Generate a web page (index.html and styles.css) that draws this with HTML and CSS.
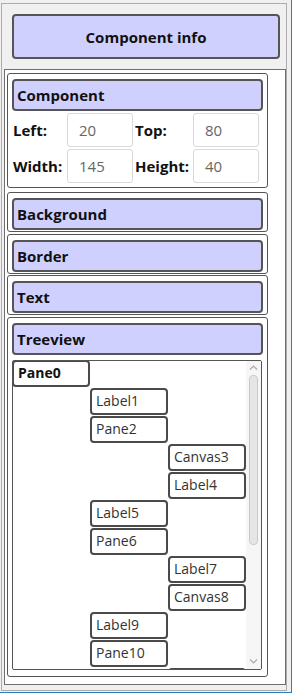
FILE: index.html
```html
<!DOCTYPE html>
<html>
<head>
<meta charset="utf-8">
<link rel="stylesheet" href="styles.css">
</head>
<body>
<div class="window">
  <div class="panel">
    <div class="title-btn">Component info</div>
    <div class="scroller">
      <section class="sec sec-comp">
        <div class="hdr">Component</div>
        <div class="props">
          <span class="lbl">Left:</span><span class="inp">20</span>
          <span class="lbl lbl2">Top:</span><span class="inp">80</span>
          <span class="lbl">Width:</span><span class="inp">145</span>
          <span class="lbl lbl2">Height:</span><span class="inp">40</span>
        </div>
      </section>
      <section class="sec"><div class="hdr">Background</div></section>
      <section class="sec"><div class="hdr">Border</div></section>
      <section class="sec"><div class="hdr">Text</div></section>
      <section class="sec sec-tree">
        <div class="hdr">Treeview</div>
        <div class="tree">
          <div class="tree-items">
            <div class="node root">Pane0</div>
            <div class="node l1">Label1</div>
            <div class="node l1">Pane2</div>
            <div class="node l2">Canvas3</div>
            <div class="node l2">Label4</div>
            <div class="node l1">Label5</div>
            <div class="node l1">Pane6</div>
            <div class="node l2">Label7</div>
            <div class="node l2">Canvas8</div>
            <div class="node l1">Label9</div>
            <div class="node l1">Pane10</div>
            <div class="node l2"></div>
          </div>
          <div class="vscroll">
            <svg class="arrow" width="15" height="14" viewBox="0 0 15 14"><polyline points="4,8.5 7.5,5 11,8.5" fill="none" stroke="#a8a8a8" stroke-width="1.2"/></svg>
            <div class="thumb"></div>
            <div class="spacer"></div>
            <svg class="arrow" width="15" height="14" viewBox="0 0 15 14"><polyline points="4,4.5 7.5,8 11,4.5" fill="none" stroke="#a8a8a8" stroke-width="1.2"/></svg>
          </div>
        </div>
      </section>
    </div>
  </div>
</div>
</body>
</html>
```
FILE: styles.css
```css
* { box-sizing: border-box; }
html, body { margin: 0; padding: 0; }
body {
  width: 293px;
  height: 695px;
  overflow: hidden;
  background: #ffffff;
  font-family: "Open Sans", "Noto Sans", sans-serif;
  color: #111;
}
.window {
  width: 292px;
  height: 693px;
  background: #f0f0f0;
  border-right: 1px solid #2f7bc4;
  border-bottom: 1px solid #2f7bc4;
  padding: 3px 0 0 1px;
}
.panel {
  width: 286px;
  height: 688px;
  border: 1px solid #adadad;
  background: #f0f0f0;
  padding: 10px 0 0 0;
}
.title-btn {
  margin-left: 10px;
  width: 268px;
  height: 45px;
  background: #d0d0ff;
  border: 2px solid #555;
  border-radius: 4px;
  display: flex;
  align-items: center;
  justify-content: center;
  font-weight: 700;
  font-size: 15px;
}
.scroller {
  margin: 10px 0 0 2px;
  width: 282px;
  height: 616px;
  background: #fff;
  border: 1px solid #6e6e6e;
  padding: 3px 0 0 2px;
  overflow: hidden;
}
.sec {
  width: 261px;
  border: 1px solid #555;
  border-radius: 3px;
  padding: 5px 4px 1px 4px;
  margin-bottom: 1.5px;
}
.sec-comp {
  padding-bottom: 4px;
  margin-bottom: 4px;
}
.hdr {
  height: 32px;
  background: #d0d0ff;
  border: 2px solid #555;
  border-radius: 4px;
  display: flex;
  align-items: center;
  padding-left: 3px;
  font-weight: 700;
  font-size: 15px;
}
.props {
  margin-top: 2px;
  display: grid;
  grid-template-columns: 55px 66px 60px 66px;
  grid-auto-rows: 34px;
  row-gap: 2px;
}
.lbl {
  display: flex;
  align-items: center;
  padding-left: 1px;
  font-weight: 700;
  font-size: 15px;
}
.lbl2 { padding-left: 2px; }
.inp {
  display: flex;
  align-items: center;
  padding-left: 11px;
  background: #fff;
  border: 1px solid #d9d9d9;
  border-radius: 3px;
  font-size: 15px;
  color: #666;
}
.sec-tree {
  padding-bottom: 6px;
}
.tree {
  margin-top: 5.5px;
  width: 250px;
  height: 310px;
  border: 1px solid #555;
  border-radius: 2px;
  display: flex;
  overflow: hidden;
}
.tree-items {
  flex: 1;
  margin: -1px 0 0 -1px;
  overflow: hidden;
}
.node {
  width: 78px;
  height: 27px;
  margin-bottom: 1px;
  background: #fff;
  border: 2px solid #4a4a4a;
  border-radius: 4px;
  padding-left: 4px;
  font-size: 14px;
  line-height: 22px;
  color: #333;
}
.node.root { font-weight: 700; color: #111; }
.node.l1 { margin-left: 78px; }
.node.l2 { margin-left: 156px; }
.vscroll {
  width: 15px;
  background: #f6f6f6;
  display: flex;
  flex-direction: column;
  align-items: center;
}
.arrow { display: block; flex: none; }
.thumb {
  width: 9px;
  height: 170px;
  background: #e6e6e6;
  border: 1px solid #c9c9c9;
  border-radius: 4px;
  flex: none;
}
.spacer { flex: 1; }
```
